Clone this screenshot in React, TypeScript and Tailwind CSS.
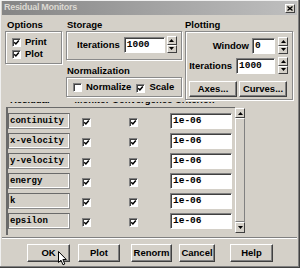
import React from "react";

const sans = "font-['Liberation_Sans',Arial,sans-serif] font-bold text-[9.5px] leading-[12px] text-black";
const mono = "font-['Liberation_Mono','Courier_New',monospace] font-bold";

function Check({ checked = true }: { checked?: boolean }) {
  return (
    <span className="relative inline-block h-[9px] w-[9px] shrink-0 bg-white border border-t-[#808080] border-l-[#808080] border-r-white border-b-white shadow-[inset_1px_1px_0_#404040]">
      {checked && (
        <svg viewBox="0 0 7 7" className="absolute left-0 top-0 h-[7px] w-[7px]">
          <path d="M1.2 3.2 L2.9 5 L5.8 1.6" stroke="#000" strokeWidth="1.5" fill="none" />
        </svg>
      )}
    </span>
  );
}

function SpinBtn({ up }: { up?: boolean }) {
  return (
    <div className="flex flex-1 items-center justify-center bg-[#d4d0c8] border border-t-white border-l-white border-r-[#404040] border-b-[#404040]">
      <svg width="5" height="3" viewBox="0 0 5 3">
        <path d={up ? "M0 3 L2.5 0 L5 3Z" : "M0 0 L2.5 3 L5 0Z"} fill="#000" />
      </svg>
    </div>
  );
}

function Spin() {
  return (
    <div className="flex h-[17px] w-[10px] shrink-0 flex-col">
      <SpinBtn up />
      <SpinBtn />
    </div>
  );
}

function Input({ value, w }: { value: string; w: string }) {
  return (
    <div
      className={`${w} h-[16px] shrink-0 bg-white border border-t-[#808080] border-l-[#808080] border-r-white border-b-white shadow-[inset_1px_1px_0_#404040] pl-[2px] ${mono} text-[9.5px] leading-[14px] text-black`}
    >
      {value}
    </div>
  );
}

function Button({ label, w, h = "h-[16px]" }: { label: string; w: string; h?: string }) {
  return (
    <div
      className={`${w} ${h} shrink-0 flex items-center justify-center bg-[#d4d0c8] border border-t-white border-l-white border-r-[#404040] border-b-[#404040] shadow-[inset_-1px_-1px_0_#808080] ${sans}`}
    >
      {label}
    </div>
  );
}

const group = "border border-[#8a8a8a] shadow-[inset_1px_1px_0_#fff,1px_1px_0_#fff]";

const rows = ["continuity", "x-velocity", "y-velocity", "energy", "k", "epsilon"];

export default function App() {
  return (
    <div className="relative h-[268px] w-[300px] overflow-hidden bg-[#d4d0c8] shadow-[inset_-1px_-1px_0_#404040,inset_-2px_-2px_0_#808080,inset_1px_1px_0_#f0f0f0]">
      {/* Title bar */}
      <div className="ml-[2px] mr-[3px] mt-[1px] flex h-[14px] items-center bg-linear-to-r from-[#858585] to-[#bfbfbf] pl-[2px] pr-[2px]">
        <span className="font-['Liberation_Sans',Arial,sans-serif] font-bold text-[9px] tracking-[-0.3px] text-[#dcd9d2]">
          Residual Monitors
        </span>
        <div className="ml-auto flex h-[9px] w-[10px] items-center justify-center bg-[#d4d0c8] border border-t-white border-l-white border-r-[#404040] border-b-[#404040]">
          <svg width="6" height="5" viewBox="0 0 6 5">
            <path d="M0.5 0.5 L5.5 4.5 M5.5 0.5 L0.5 4.5" stroke="#000" strokeWidth="1.3" />
          </svg>
        </div>
      </div>

      {/* Top section */}
      <div className="flex pt-[4px]">
        {/* Options */}
        <div className="ml-[5px] flex w-[57px] flex-col">
          <div className={`pl-[2px] ${sans}`}>Options</div>
          <div className={`${group} flex h-[33px] flex-col pl-[6px] pt-[4px]`}>
            <div className="flex h-[12px] items-center gap-[4px]">
              <Check />
              <span className={sans}>Print</span>
            </div>
            <div className="flex h-[12px] items-center gap-[4px]">
              <Check />
              <span className={sans}>Plot</span>
            </div>
          </div>
        </div>

        {/* Storage / Normalization */}
        <div className="ml-[4px] flex w-[116px] flex-col">
          <div className={`pl-[1px] ${sans}`}>Storage</div>
          <div className={`${group} flex h-[29px] items-start pl-[10px] pt-[4px]`}>
            <div className="flex items-center">
              <span className={sans}>Iterations</span>
              <div className="ml-[4px]">
                <Input value="1000" w="w-[41px]" />
              </div>
              <div className="ml-[2px]">
                <Spin />
              </div>
            </div>
          </div>
          <div className={`mt-[5px] pl-[1px] ${sans}`}>Normalization</div>
          <div className={`${group} flex h-[20px] items-center pl-[6px]`}>
            <Check checked={false} />
            <span className={`ml-[4px] ${sans}`}>Normalize</span>
            <span className="ml-[5px]">
              <Check />
            </span>
            <span className={`ml-[4px] ${sans}`}>Scale</span>
          </div>
        </div>

        {/* Plotting */}
        <div className="ml-[3px] flex w-[108px] flex-col">
          <div className={sans}>Plotting</div>
          <div className={`${group} flex h-[69px] flex-col pt-[5px]`}>
            <div className="flex h-[17px] items-center justify-end gap-[3px] pr-[4px]">
              <span className={sans}>Window</span>
              <Input value="0" w="w-[23px]" />
              <Spin />
            </div>
            <div className="mt-[3px] flex h-[17px] items-center justify-end gap-[3px] pr-[4px]">
              <span className={`mr-[1px] ${sans}`}>Iterations</span>
              <Input value="1000" w="w-[39px]" />
              <Spin />
            </div>
            <div className="mt-[7px] flex gap-[2px] pl-[3px]">
              <Button label="Axes..." w="w-[48px]" />
              <Button label="Curves..." w="w-[48px]" />
            </div>
          </div>
        </div>
      </div>

      {/* Table viewport */}
      <div className="ml-[6px] mt-[2px] flex h-[133px] w-[239px]">
        <div className="flex h-full w-[229px] flex-col overflow-hidden">
          <div className="h-[5px] shrink-0 overflow-hidden">
            <div className={`-mt-[8px] flex ${sans}`}>
              <span className="ml-[4px]">Residual</span>
              <span className="ml-[25px]">Monitor Convergence Criterion</span>
            </div>
          </div>
          <div className="flex flex-1 flex-col gap-[4px] border-l-2 border-t border-[#6a6a6a] pt-[5px]">
            {rows.map((r) => (
              <div key={r} className="flex h-[16px] shrink-0 items-center">
                <div
                  className={`h-[16px] w-[62px] shrink-0 border border-t-[#6a6a6a] border-l-[#6a6a6a] border-r-[#8a8a8a] border-b-[#8a8a8a] shadow-[inset_-1px_-1px_0_#fff] pl-[1px] ${mono} text-[9px] leading-[14px] text-black`}
                >
                  {r}
                </div>
                <span className="ml-[12px]">
                  <Check />
                </span>
                <span className="ml-[38px]">
                  <Check />
                </span>
                <div className="ml-[32px]">
                  <Input value="1e-06" w="w-[62px]" />
                </div>
              </div>
            ))}
          </div>
        </div>
        {/* Scrollbar */}
        <div className="mt-[6px] flex h-[125px] w-[10px] flex-col">
          <div className="flex h-[10px] shrink-0 items-center justify-center border border-t-white border-l-white border-r-[#404040] border-b-[#404040] bg-[#d4d0c8]">
            <svg width="5" height="3" viewBox="0 0 5 3">
              <path d="M0 3 L2.5 0 L5 3Z" fill="#000" />
            </svg>
          </div>
          <div className="flex-1 border border-t-white border-l-white border-r-[#808080] border-b-[#808080] bg-[#d4d0c8]" />
          <div className="flex h-[11px] shrink-0 items-center justify-center border border-t-white border-l-white border-r-[#404040] border-b-[#404040] bg-[#d4d0c8]">
            <svg width="5" height="3" viewBox="0 0 5 3">
              <path d="M0 0 L2.5 3 L5 0Z" fill="#000" />
            </svg>
          </div>
        </div>
      </div>

      {/* Separator */}
      <div className="ml-[2px] mr-[3px] mt-[2px] h-[2px] border-t border-b border-t-[#808080] border-b-white" />

      {/* Buttons */}
      <div className="mt-[5px] flex">
        <div className="ml-[27px]">
          <Button label="OK" w="w-[43px]" h="h-[18px]" />
        </div>
        <div className="ml-[8px]">
          <Button label="Plot" w="w-[42px]" h="h-[18px]" />
        </div>
        <div className="ml-[11px]">
          <Button label="Renorm" w="w-[41px]" h="h-[18px]" />
        </div>
        <div className="ml-[7px]">
          <Button label="Cancel" w="w-[36px]" h="h-[18px]" />
        </div>
        <div className="ml-[15px]">
          <Button label="Help" w="w-[43px]" h="h-[18px]" />
        </div>
      </div>

      {/* Mouse cursor */}
      <svg className="absolute left-[58px] top-[251px]" width="10" height="15" viewBox="0 0 10 15">
        <path d="M0.5 0.5 L0.5 11.5 L3 9.2 L5 13.8 L6.8 13 L4.9 8.5 L8.3 8.5 Z" fill="#fff" stroke="#000" strokeWidth="1" strokeLinejoin="round" />
      </svg>
    </div>
  );
}
